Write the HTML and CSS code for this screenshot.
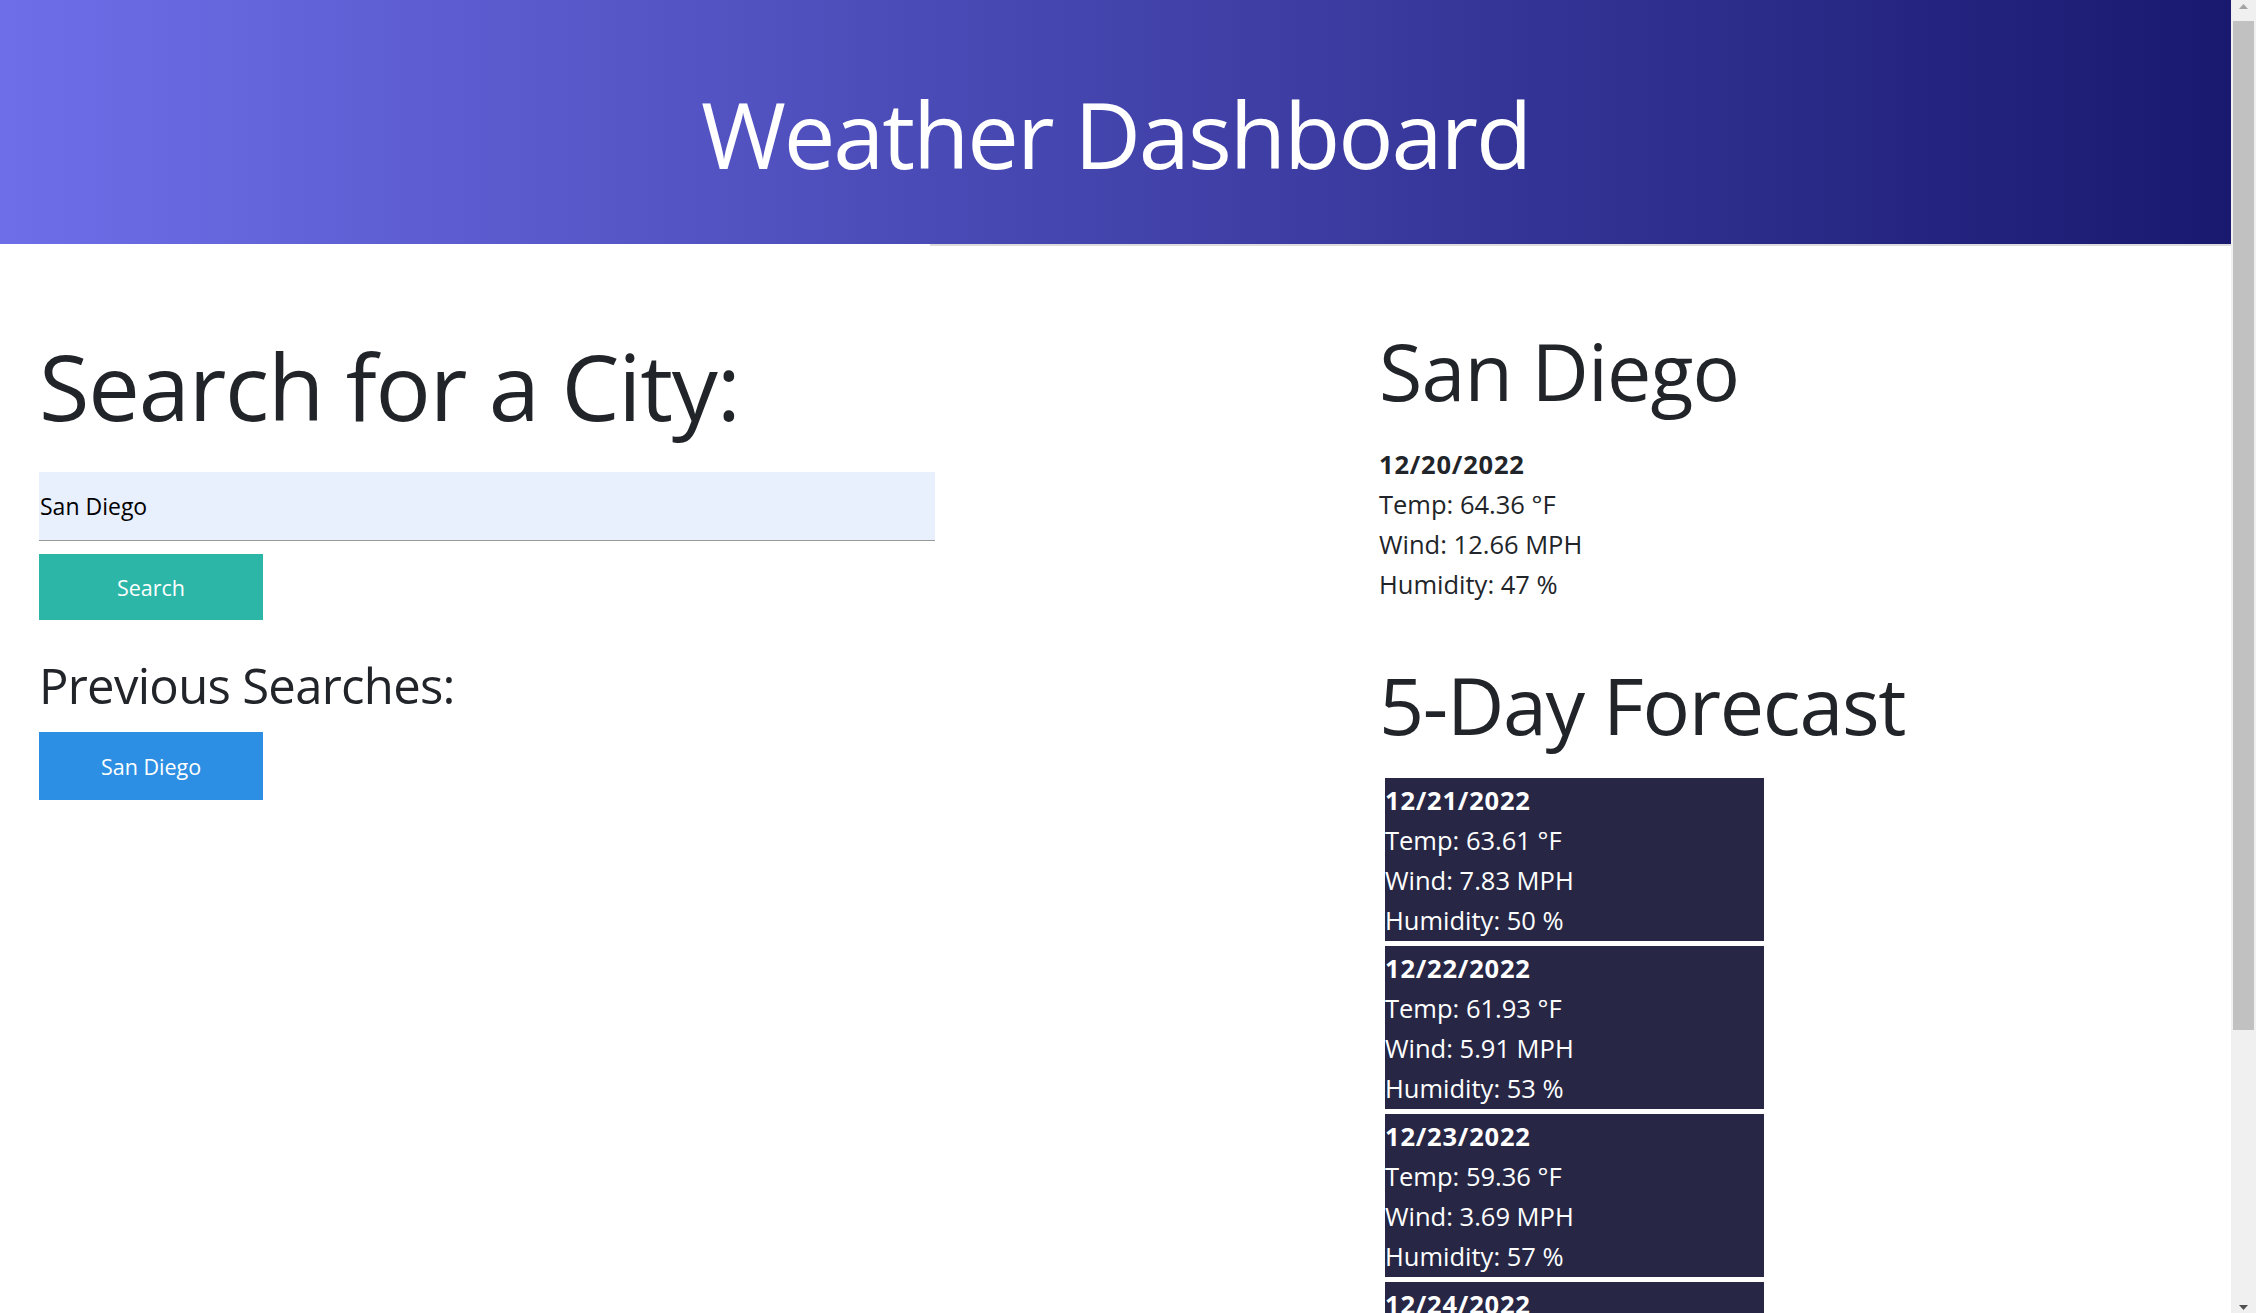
FILE: index.html
```html
<!DOCTYPE html>
<html lang="en">
<head>
<meta charset="utf-8">
<title>Weather Dashboard</title>
<link rel="stylesheet" href="styles.css">
</head>
<body>
  <div class="page">
    <header class="hero">
      <h1 class="hero-title">Weather Dashboard</h1>
    </header>
    <div class="hero-rule"></div>
    <main class="layout">
      <section class="search-col">
        <h2 class="search-title">Search for a City:</h2>
        <input class="city-input" type="text" value="San Diego">
        <button class="btn btn-search" type="button">Search</button>
        <h3 class="history-title">Previous Searches:</h3>
        <div class="history">
          <button class="btn btn-history" type="button">San Diego</button>
        </div>
      </section>
      <section class="weather-col">
        <h2 class="city-name">San Diego</h2>
        <div class="today">
          <p class="date">12/20/2022</p>
          <p>Temp: 64.36 °F</p>
          <p>Wind: 12.66 MPH</p>
          <p>Humidity: 47 %</p>
        </div>
        <h2 class="forecast-title">5-Day Forecast</h2>
        <div class="forecast">
          <div class="card">
            <p class="date">12/21/2022</p>
            <p>Temp: 63.61 °F</p>
            <p>Wind: 7.83 MPH</p>
            <p>Humidity: 50 %</p>
          </div>
          <div class="card">
            <p class="date">12/22/2022</p>
            <p>Temp: 61.93 °F</p>
            <p>Wind: 5.91 MPH</p>
            <p>Humidity: 53 %</p>
          </div>
          <div class="card">
            <p class="date">12/23/2022</p>
            <p>Temp: 59.36 °F</p>
            <p>Wind: 3.69 MPH</p>
            <p>Humidity: 57 %</p>
          </div>
          <div class="card">
            <p class="date">12/24/2022</p>
            <p>Temp: 60.12 °F</p>
            <p>Wind: 4.27 MPH</p>
            <p>Humidity: 55 %</p>
          </div>
          <div class="card">
            <p class="date">12/25/2022</p>
            <p>Temp: 61.48 °F</p>
            <p>Wind: 5.02 MPH</p>
            <p>Humidity: 52 %</p>
          </div>
        </div>
      </section>
    </main>
  </div>
  <div class="scrollbar">
    <div class="sb-btn sb-up">
      <svg width="9" height="5" viewBox="0 0 9 5"><path d="M4.5 0 L9 5 L0 5 Z" fill="#a3a3a3"/></svg>
    </div>
    <div class="sb-track">
      <div class="sb-thumb"></div>
    </div>
    <div class="sb-btn sb-down">
      <svg width="9" height="5" viewBox="0 0 9 5"><path d="M0 0 L9 0 L4.5 5 Z" fill="#505050"/></svg>
    </div>
  </div>
</body>
</html>
```

FILE: styles.css
```css
html, body {
  margin: 0;
  padding: 0;
  height: 100%;
  overflow: hidden;
}

body {
  display: flex;
  font-family: "Open Sans", "Noto Sans", sans-serif;
  color: #212529;
  background: #ffffff;
}

.page {
  flex: 1;
  min-width: 0;
  height: 100%;
  overflow: hidden;
}

/* ---------- header ---------- */
.hero {
  height: 244px;
  box-sizing: border-box;
  padding-top: 84px;
  text-align: center;
  background: linear-gradient(to right, #6e6ee9, #191970);
}

.hero-title {
  margin: 0;
  font-size: 92px;
  line-height: 100px;
  font-weight: 400;
  letter-spacing: -2.1px;
  color: #ffffff;
}

.hero-rule {
  height: 2px;
  margin-left: 930px;
  background: #dcdcdc;
}

/* ---------- layout ---------- */
.layout {
  display: grid;
  grid-template-columns: 1340px 1fr;
  padding-left: 39px;
}

.search-col {
  display: flex;
  flex-direction: column;
  align-items: flex-start;
  padding-top: 85px;
}

.search-title {
  margin: 0 0 31px;
  font-size: 92px;
  line-height: 110px;
  font-weight: 400;
  letter-spacing: -1.2px;
}

.city-input {
  width: 896px;
  height: 69px;
  box-sizing: border-box;
  margin: 0;
  padding: 0 0 0 1px;
  border: none;
  border-bottom: 1px solid #999999;
  background: #e8f0fe;
  font-family: inherit;
  font-size: 23px;
  color: #000000;
  outline: none;
}

.btn {
  width: 224px;
  border: none;
  margin: 0;
  padding: 0;
  color: #ffffff;
  font-family: inherit;
  font-size: 21.5px;
  cursor: pointer;
}

.btn-search {
  margin-top: 13px;
  height: 66px;
  background: #2bb6a8;
}

.history-title {
  margin: 35px 0 17px;
  font-size: 49px;
  line-height: 60px;
  font-weight: 400;
  letter-spacing: -0.7px;
}

.btn-history {
  height: 68px;
  background: #2d8fe3;
}

/* ---------- weather column ---------- */
.weather-col {
  padding-top: 77px;
}

.city-name,
.forecast-title {
  margin: 0;
  font-size: 79px;
  line-height: 96px;
  font-weight: 400;
}

.city-name {
  margin-bottom: 25px;
  letter-spacing: -0.9px;
}

.forecast-title {
  margin-top: 53px;
  margin-bottom: 25px;
  letter-spacing: -1.3px;
}

.today p,
.card p {
  margin: 0;
  font-size: 25.5px;
  line-height: 40px;
}

.today .date,
.card .date {
  font-weight: 700;
  letter-spacing: 0.8px;
}

.card {
  width: 379px;
  margin: 0 0 5px 6px;
  padding: 2px 0 1px;
  background: #272745;
  color: #ffffff;
}

/* ---------- fake scrollbar ---------- */
.scrollbar {
  width: 25px;
  flex: none;
  display: flex;
  flex-direction: column;
  background: #f0f0f0;
}

.sb-btn {
  height: 21px;
  display: flex;
  justify-content: center;
  box-sizing: border-box;
}

.sb-up {
  align-items: flex-start;
  padding-top: 4px;
}

.sb-down {
  align-items: flex-end;
  padding-bottom: 3px;
}

.sb-track {
  flex: 1;
}

.sb-thumb {
  height: 1009px;
  margin: 0 2px;
  background: #c1c1c1;
}
```
